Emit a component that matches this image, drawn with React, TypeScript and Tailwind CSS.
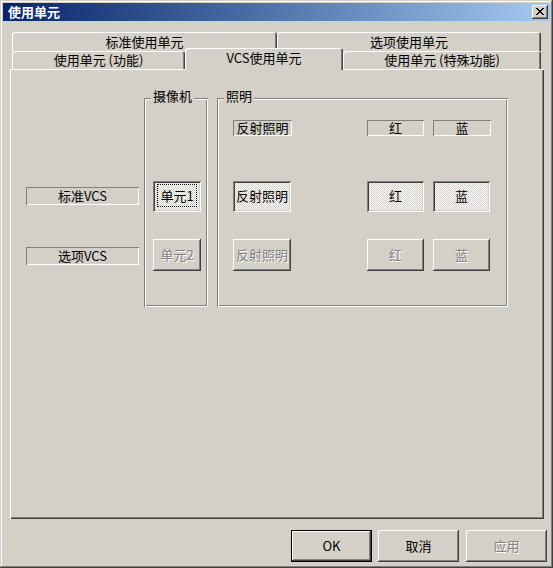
import React from 'react';

const raised =
  'shadow-[inset_-1px_-1px_#404040,inset_1px_1px_#fff,inset_-2px_-2px_#808080,inset_2px_2px_#d4d0c8]';
const pushed =
  'shadow-[inset_1px_1px_#808080,inset_-1px_-1px_#fff,inset_2px_2px_#404040,inset_-2px_-2px_#d4d0c8] bg-[conic-gradient(#fff_25%,#d4d0c8_0_50%,#fff_0_75%,#d4d0c8_0)] bg-[length:2px_2px]';
const sunkenLabel = 'shadow-[inset_1px_1px_#808080,inset_-1px_-1px_#fff]';
const etched =
  'shadow-[inset_1px_1px_#808080,inset_-1px_-1px_#fff,inset_2px_2px_#fff,inset_-2px_-2px_#808080]';
const tabEdge = 'shadow-[inset_1px_1px_#fff,inset_-1px_0_#404040,inset_-2px_0_#808080] rounded-t-[3px]';
const disabledText = 'text-[#808080] [text-shadow:1px_1px_0_#fff]';

function Btn({
  label,
  w,
  h = 'h-[31px]',
  state = 'normal',
  focus = false,
}: {
  label: string;
  w: string;
  h?: string;
  state?: 'normal' | 'pushed' | 'disabled';
  focus?: boolean;
}) {
  return (
    <div
      className={`${w} ${h} flex items-center justify-center shrink-0 pb-[2px] ${
        state === 'pushed' ? pushed : raised
      } ${state === 'disabled' ? disabledText : 'text-black'}`}
    >
      <span
        className={
          focus ? 'outline-1 outline-dotted outline-black px-[2px] py-[4px] leading-none' : 'leading-none'
        }
      >
        {label}
      </span>
    </div>
  );
}

function Label({ text, w, h }: { text: string; w: string; h: string }) {
  return (
    <div className={`${w} ${h} ${sunkenLabel} flex items-center justify-center shrink-0 leading-none pb-[2px]`}>
      {text}
    </div>
  );
}

function Group({ title, w, children }: { title: string; w: string; children: React.ReactNode }) {
  return (
    <div className={`${w} h-[209px] ${etched} flex flex-col shrink-0`}>
      <span className="-mt-[9px] ml-[7px] px-[2px] h-[14px] w-fit bg-[#d4d0c8] leading-[14px]">{title}</span>
      {children}
    </div>
  );
}

export default function App() {
  return (
    <div
      className="w-[553px] h-[568px] bg-[#d4d0c8] p-[3px] flex flex-col text-[13px] text-black shadow-[inset_-1px_-1px_#404040,inset_1px_1px_#d4d0c8,inset_-2px_-2px_#808080,inset_2px_2px_#fff] overflow-hidden"
      style={{ fontFamily: '"Noto Sans CJK SC", "Liberation Sans", sans-serif' }}
    >
      {/* title bar */}
      <div className="h-[18px] bg-linear-to-r from-[#0a246a] to-[#a6caf0] flex items-start justify-between">
        <span className="pl-[5px] text-white font-bold text-[13px] leading-[18px]">使用单元</span>
        <div className={`mt-[2px] mr-[2px] w-[16px] h-[14px] bg-[#d4d0c8] ${raised} flex items-center justify-center`}>
          <svg width="8" height="7" viewBox="0 0 8 7" shapeRendering="crispEdges" className="-mt-[1px] -ml-[1px]">
            <g fill="#000">
              <rect x="0" y="0" width="2" height="1" />
              <rect x="6" y="0" width="2" height="1" />
              <rect x="1" y="1" width="2" height="1" />
              <rect x="5" y="1" width="2" height="1" />
              <rect x="2" y="2" width="4" height="1" />
              <rect x="3" y="3" width="2" height="1" />
              <rect x="2" y="4" width="4" height="1" />
              <rect x="1" y="5" width="2" height="1" />
              <rect x="5" y="5" width="2" height="1" />
              <rect x="0" y="6" width="2" height="1" />
              <rect x="6" y="6" width="2" height="1" />
            </g>
          </svg>
        </div>
      </div>

      <div className="pl-[7px] pr-[6px] pt-[11px] flex flex-col">
        {/* tabs */}
        <div className="ml-[2px] flex h-[19px]">
          <div className={`w-[265px] ${tabEdge} flex items-center justify-center leading-none pb-[1px]`}>标准使用单元</div>
          <div className={`w-[264px] ${tabEdge} flex items-center justify-center leading-none pb-[1px]`}>选项使用单元</div>
        </div>
        <div className="ml-[2px] flex h-[18px] items-start">
          <div className={`w-[173px] h-[18px] ${tabEdge} flex items-center justify-center leading-none pb-[1px]`}>
            使用单元 (功能)
          </div>
          <div
            className={`relative z-10 w-[158px] h-[22px] -mt-[3px] bg-[#d4d0c8] ${tabEdge} flex items-center justify-center leading-none pb-[3px]`}
          >
            VCS使用单元
          </div>
          <div className={`w-[198px] h-[18px] ${tabEdge} flex items-center justify-center leading-none pb-[1px]`}>
            使用单元 (特殊功能)
          </div>
        </div>

        {/* panel */}
        <div className="h-[450px] shadow-[inset_1px_1px_#fff,inset_-1px_-1px_#404040,inset_-2px_-2px_#808080] pt-[29px] pl-[16px] flex items-start">
          <div className="w-[113px] flex flex-col pt-[89px] gap-[42px] shrink-0">
            <Label text="标准VCS" w="w-[113px]" h="h-[18px]" />
            <Label text="选项VCS" w="w-[113px]" h="h-[18px]" />
          </div>

          <div className="ml-[5px]">
            <Group title="摄像机" w="w-[64px]">
              <div className="ml-[9px] mt-[78px] flex flex-col gap-[27px]">
                <Btn label="单元1" w="w-[48px]" state="pushed" focus />
                <Btn label="单元2" w="w-[48px]" h="h-[32px]" state="disabled" />
              </div>
            </Group>
          </div>

          <div className="ml-[9px]">
            <Group title="照明" w="w-[291px]">
              <div className="ml-[16px] mt-[17px] flex">
                <Label text="反射照明" w="w-[59px]" h="h-[16px]" />
                <div className="ml-[75px]">
                  <Label text="红" w="w-[57px]" h="h-[16px]" />
                </div>
                <div className="ml-[9px]">
                  <Label text="蓝" w="w-[58px]" h="h-[16px]" />
                </div>
              </div>
              <div className="ml-[16px] mt-[45px] flex">
                <Btn label="反射照明" w="w-[58px]" state="pushed" />
                <div className="ml-[76px] flex gap-[9px]">
                  <Btn label="红" w="w-[57px]" state="pushed" />
                  <Btn label="蓝" w="w-[57px]" state="pushed" />
                </div>
              </div>
              <div className="ml-[16px] mt-[27px] flex">
                <Btn label="反射照明" w="w-[58px]" h="h-[32px]" state="disabled" />
                <div className="ml-[76px] flex gap-[9px]">
                  <Btn label="红" w="w-[57px]" h="h-[32px]" state="disabled" />
                  <Btn label="蓝" w="w-[57px]" h="h-[32px]" state="disabled" />
                </div>
              </div>
            </Group>
          </div>
        </div>
      </div>

      {/* dialog buttons */}
      <div className="mt-[11px] flex justify-end pr-[3px]">
        <div className="w-[81px] h-[32px] flex items-center justify-center leading-none pb-[2px] shadow-[inset_0_0_0_1px_#000,inset_-2px_-2px_#404040,inset_2px_2px_#fff,inset_-3px_-3px_#808080,inset_3px_3px_#d4d0c8]">
          OK
        </div>
        <div className="ml-[6px]">
          <Btn label="取消" w="w-[81px]" h="h-[32px]" />
        </div>
        <div className="ml-[7px]">
          <Btn label="应用" w="w-[81px]" h="h-[32px]" state="disabled" />
        </div>
      </div>
    </div>
  );
}
